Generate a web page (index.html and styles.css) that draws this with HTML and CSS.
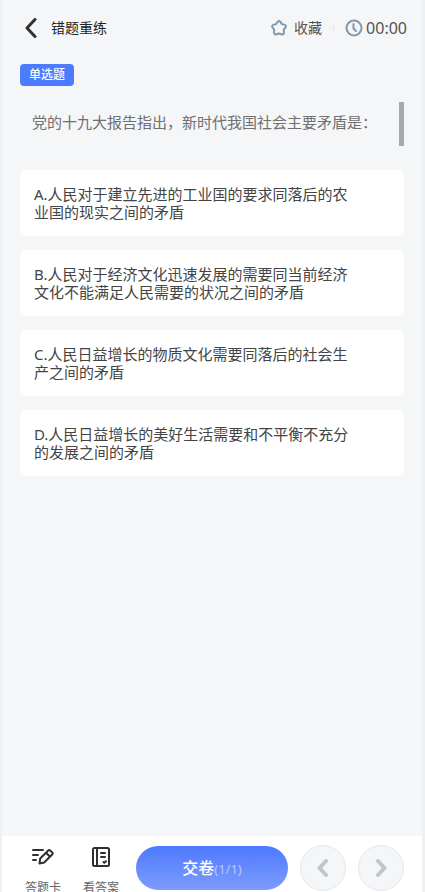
FILE: index.html
```html
<!DOCTYPE html>
<html lang="zh-CN">
<head>
<meta charset="utf-8">
<meta name="viewport" content="width=device-width, initial-scale=1">
<title>错题重练</title>
<link rel="stylesheet" href="styles.css">
</head>
<body>
<div class="app">
  <header class="topbar">
    <button class="back" type="button" aria-label="返回">
      <svg width="12" height="20" viewBox="0 0 12 20"><path d="M10 1.500 2 10l8 8.500"/></svg>
    </button>
    <h1 class="title">错题重练</h1>
    <button class="favorite" type="button">
      <svg class="line-icon" width="16" height="16" viewBox="0 0 16 16"><path d="M6.400 2.100Q8 0 9.600 2.100L10.700 4 13.200 4.600Q15.800 5.400 14.300 7.600L12.800 9.600 12.900 12.400Q12.900 15.200 10.400 14.300L8 13.500 5.600 14.300Q3.100 15.200 3.100 12.400L3.200 9.600 1.700 7.600Q.2 5.400 2.800 4.600L5.300 4Z"/></svg>
      <span>收藏</span>
    </button>
    <span class="divider"></span>
    <div class="timer">
      <svg class="line-icon" width="18" height="18" viewBox="0 0 18 18"><circle cx="9" cy="9" r="7.500"/><path d="M8.500 5v4.500l2.500 2.500"/></svg>
      <time>00:00</time>
    </div>
  </header>
  <main class="content">
    <span class="tag">单选题</span>
    <div class="question"><p>党的十九大报告指出，新时代我国社会主要矛盾是：</p></div>
    <div class="options">
      <button class="option" type="button">A.人民对于建立先进的工业国的要求同落后的农业国的现实之间的矛盾</button>
      <button class="option" type="button">B.人民对于经济文化迅速发展的需要同当前经济文化不能满足人民需要的状况之间的矛盾</button>
      <button class="option" type="button">C.人民日益增长的物质文化需要同落后的社会生产之间的矛盾</button>
      <button class="option" type="button">D.人民日益增长的美好生活需要和不平衡不充分的发展之间的矛盾</button>
    </div>
  </main>
  <footer class="bottombar">
    <button class="tool" type="button">
      <svg width="22" height="22" viewBox="0 0 22 22"><path d="M1 4h10M1 9h5M1 14h3M7.500 17.500l.7-5 8-8q1-.9 2 0l2 2q.9 1 0 2l-8 8Zm6.500-10.800 4 4"/></svg>
      <span>答题卡</span>
    </button>
    <button class="tool" type="button">
      <svg width="22" height="22" viewBox="0 0 22 22"><rect x="3" y="2" width="16" height="18" rx="1.500"/><path d="M7 2v18M11 7h4M11 11h4M13.500 16l.8.8 1.700-1.600"/></svg>
      <span>看答案</span>
    </button>
    <button class="submit" type="button">交卷<small>(1/1)</small></button>
    <button class="nav" type="button" aria-label="上一题">
      <svg width="12" height="18" viewBox="0 0 12 18"><path d="M9 2 2.500 9 9 16"/></svg>
    </button>
    <button class="nav" type="button" aria-label="下一题">
      <svg width="12" height="18" viewBox="0 0 12 18"><path d="M3 2l6.500 7L3 16"/></svg>
    </button>
  </footer>
</div>
</body>
</html>
```
FILE: styles.css
```css
* {
  box-sizing: border-box;
}

body {
  margin: 0;
  background: #eff0f2;
  color: #444;
  font-family: "Noto Sans", "Noto Sans CJK SC", sans-serif;
  font-size: 15px;
  line-height: 18px;
}

button {
  margin: 0;
  padding: 0;
  border: 0;
  background: none;
  color: inherit;
  font: inherit;
}

svg {
  display: block;
  flex: none;
  fill: none;
  stroke: currentColor;
  stroke-linecap: round;
  stroke-linejoin: round;
}

.app {
  display: flex;
  flex-direction: column;
  height: 100vh;
  margin: 0 3px 0 2px;
  overflow: hidden;
  background: #f4f6f8;
}

.topbar {
  display: flex;
  align-items: center;
  height: 55px;
  padding: 0 15px 0 23px;
}

.back {
  color: #303030;
  stroke-width: 3;
}

.title {
  flex: 1;
  margin: 0 0 0 14px;
  color: #222;
  font-size: 14px;
  font-weight: 400;
}

.line-icon {
  color: #8299ad;
  stroke-width: 2;
}

.favorite {
  display: flex;
  align-items: center;
  gap: 7px;
  color: #555;
  font-size: 14px;
}

.divider {
  width: 1px;
  height: 6px;
  margin: 0 11px;
  background: #e0e3e6;
}

.timer {
  display: flex;
  align-items: center;
  gap: 3px;
  color: #555;
  font-size: 16px;
}

.content {
  flex: 1;
  min-height: 0;
  padding: 9px 18px 0;
}

.tag {
  display: block;
  width: fit-content;
  padding: 2px 9px;
  border-radius: 4px;
  background: #4d7bfe;
  color: #fff;
  font-size: 12px;
  font-weight: 500;
}

.question {
  margin: 16px 0 24px;
  padding: 11px 8px 15px 12px;
  border-right: 5px solid #a8a9ab;
  color: #707070;
}

.question p {
  margin: 0;
}

.options {
  display: grid;
  gap: 14px;
}

.option {
  padding: 15px 44px 15px 14px;
  border-radius: 5px;
  background: #fff;
  text-align: left;
}

.bottombar {
  display: flex;
  align-items: flex-start;
  height: 56px;
  padding: 9px 18px 0 23px;
  background: #fff;
}

.tool {
  display: flex;
  flex-direction: column;
  align-items: center;
  gap: 11px;
  margin: 1px 22px 0 0;
  color: #303030;
  font-size: 12px;
  stroke-width: 2;
}

.tool span {
  color: #666;
}

.submit {
  flex: 1;
  height: 44px;
  margin: 1px 0 0 -5px;
  border-radius: 22px;
  background: linear-gradient(#4d79fe, #7e9cff);
  color: #fff;
  font-size: 16px;
  font-weight: 500;
}

.submit small {
  color: #b9c9ff;
  font-size: 13px;
  font-weight: 400;
}

.nav {
  display: grid;
  flex: none;
  place-items: center;
  width: 46px;
  height: 46px;
  margin-left: 12px;
  border: 1px solid #dfe8ef;
  border-radius: 50%;
  background: #f4f6f8;
  color: #c3c4c6;
  stroke-width: 4;
}
```
